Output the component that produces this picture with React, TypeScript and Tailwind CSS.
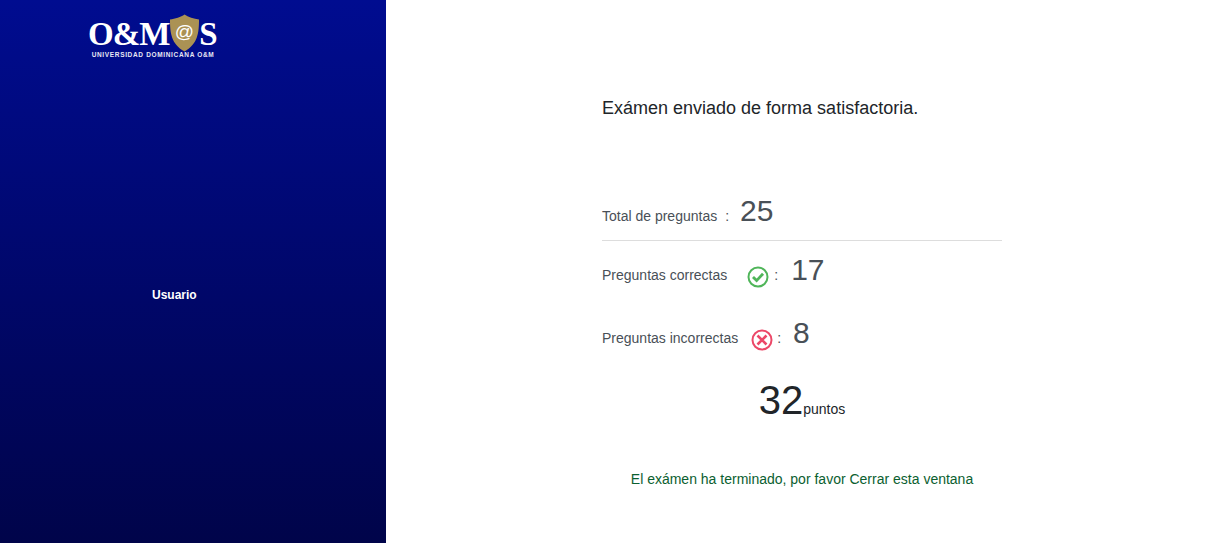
import React from 'react'

const font = { fontFamily: '"Liberation Sans", Arial, sans-serif' }

function Logo() {
  return (
    <div className="flex w-[130px] flex-col items-center">
      <div className="flex h-[37px] w-[130px] items-center text-white">
        <span className="mt-[1px] font-['Liberation_Serif',serif] text-[33px] leading-none font-bold tracking-[-1px]">O&amp;M</span>
        <svg width="31" height="38" viewBox="0 0 31 38" className="-mt-[1px] shrink-0">
          <path d="M15.5 0.5 C12 3 6 5 1 5.5 C1 18 2 30 15.5 37.5 C29 30 30 18 30 5.5 C25 5 19 3 15.5 0.5 Z" fill="#ab9254" />
          <text x="15.5" y="24" textAnchor="middle" fontSize="19" fill="#ffffff" fontFamily="Liberation Sans, sans-serif">@</text>
        </svg>
        <span className="mt-[1px] -ml-[1px] font-['Liberation_Serif',serif] text-[33px] leading-none font-bold">S</span>
      </div>
      <div className="-mt-[1px] text-[6.5px] leading-[8px] font-bold tracking-[0.66px] whitespace-nowrap text-[#e8e8f4]">
        UNIVERSIDAD DOMINICANA O&amp;M
      </div>
    </div>
  )
}

function CheckIcon() {
  return (
    <svg width="22" height="22" viewBox="0 0 22 22">
      <circle cx="11" cy="11" r="9.5" fill="none" stroke="#4fb559" strokeWidth="2" />
      <path d="M6 11 L9.6 14.6 L16 7.8" fill="none" stroke="#4fb559" strokeWidth="2.8" />
    </svg>
  )
}

function CrossIcon() {
  return (
    <svg width="22" height="22" viewBox="0 0 22 22">
      <circle cx="11" cy="11" r="9.5" fill="none" stroke="#ec4868" strokeWidth="2" />
      <path d="M6.5 6.5 L15.5 15.5 M15.5 6.5 L6.5 15.5" fill="none" stroke="#ec4868" strokeWidth="2.6" />
    </svg>
  )
}

export default function App() {
  return (
    <div className="flex h-[543px] w-full overflow-hidden bg-white" style={font}>
      {/* Sidebar */}
      <aside className="flex w-[386px] shrink-0 flex-col bg-gradient-to-b from-[#000c90] to-[#00044a]">
        <div className="mt-[15px] ml-[88px]">
          <Logo />
        </div>
        <p className="mt-[228px] ml-[152px] text-[12px] leading-[16px] font-bold text-white">Usuario</p>
      </aside>

      {/* Resultado */}
      <main className="flex-1 pt-[97px] pl-[216px]">
        <div className="w-[400px] text-[14px] text-[#495057]">
          <h1 className="text-[18px] leading-[22px] font-normal text-[#212529]">Exámen enviado de forma satisfactoria.</h1>

          <div className="mt-[80px] flex h-[42px] items-end border-b border-[#dddddd] pb-[14px]">
            <span className="leading-[20px]">Total de preguntas</span>
            <span className="ml-[8px] leading-[20px]">:</span>
            <span className="ml-[11px] translate-y-[2px] text-[30px] leading-[34px]">25</span>
          </div>

          <div className="mt-[14px] flex h-[40px] items-center">
            <span>Preguntas correctas</span>
            <span className="mt-[4px] ml-[20px]"><CheckIcon /></span>
            <span className="ml-[5px]">:</span>
            <span className="ml-[13px] -translate-y-[5px] text-[30px] leading-[34px]">17</span>
          </div>

          <div className="mt-[23px] flex h-[40px] items-center">
            <span>Preguntas incorrectas</span>
            <span className="mt-[4px] ml-[13px]"><CrossIcon /></span>
            <span className="ml-[4px]">:</span>
            <span className="ml-[12px] -translate-y-[5px] text-[30px] leading-[34px]">8</span>
          </div>

          <div className="mt-[18px] flex items-baseline justify-center text-[#212529]">
            <span className="text-[40px] leading-[48px]">32</span>
            <span className="text-[14px]">puntos</span>
          </div>

          <p className="mt-[45px] text-center text-[14px] leading-[20px] text-[#0b6030]">
            El exámen ha terminado, por favor Cerrar esta ventana
          </p>
        </div>
      </main>
    </div>
  )
}
